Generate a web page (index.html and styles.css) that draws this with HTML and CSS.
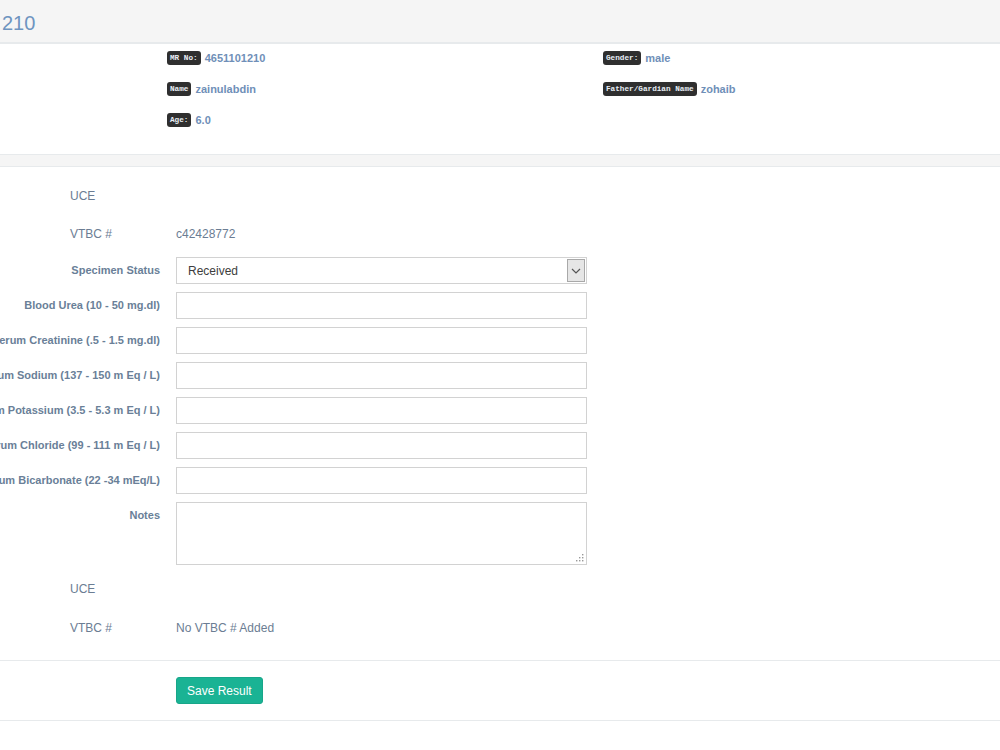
FILE: index.html
```html
<!DOCTYPE html>
<html lang="en">
<head>
  <meta charset="UTF-8" />
  <title>Lab Result</title>
  <link rel="stylesheet" href="styles.css">
</head>
<body>

<div class="page-header">
  <h2 class="page-title">210</h2>
</div>

<div class="patient-info">
  <div class="info-col">
    <div class="info-row"><span class="tag">MR No:</span><b>4651101210</b></div>
    <div class="info-row"><span class="tag">Name</span><b>zainulabdin</b></div>
    <div class="info-row"><span class="tag">Age:</span><b>6.0</b></div>
  </div>
  <div class="info-col">
    <div class="info-row"><span class="tag">Gender:</span><b>male</b></div>
    <div class="info-row"><span class="tag">Father/Gardian Name</span><b>zohaib</b></div>
  </div>
</div>

<div class="band"></div>

<form class="result-form">
  <div class="plain-row"><span class="head">UCE</span></div>
  <div class="plain-row vtbc"><span class="head">VTBC #</span><span class="value">c42428772</span></div>

  <div class="form-row">
    <label class="label"><span>Specimen Status</span></label>
    <div class="select-box">
      <select>
        <option>Received</option>
        <option>Pending</option>
        <option>Rejected</option>
      </select>
      <span class="select-arrow">
        <svg width="10" height="6" viewBox="0 0 10 6"><path d="M1 1l4 4 4-4" fill="none" stroke="#555" stroke-width="1.2"/></svg>
      </span>
    </div>
  </div>

  <div class="form-row">
    <label class="label"><span>Blood Urea (10 - 50 mg.dl)</span></label>
    <input class="field" type="text">
  </div>
  <div class="form-row">
    <label class="label"><span>Serum Creatinine (.5 - 1.5 mg.dl)</span></label>
    <input class="field" type="text">
  </div>
  <div class="form-row">
    <label class="label"><span>Serum Sodium (137 - 150 m Eq / L)</span></label>
    <input class="field" type="text">
  </div>
  <div class="form-row">
    <label class="label"><span>Serum Potassium (3.5 - 5.3 m Eq / L)</span></label>
    <input class="field" type="text">
  </div>
  <div class="form-row">
    <label class="label"><span>Serum Chloride (99 - 111 m Eq / L)</span></label>
    <input class="field" type="text">
  </div>
  <div class="form-row">
    <label class="label"><span>Serum Bicarbonate (22 -34 mEq/L)</span></label>
    <input class="field" type="text">
  </div>
  <div class="form-row">
    <label class="label"><span>Notes</span></label>
    <div class="notes-box">
      <textarea class="field notes"></textarea>
      <svg class="grip" width="8" height="8" viewBox="0 0 8 8" fill="#999">
        <rect x="6" y="0" width="1.4" height="1.4"/>
        <rect x="3" y="3" width="1.4" height="1.4"/><rect x="6" y="3" width="1.4" height="1.4"/>
        <rect x="0" y="6" width="1.4" height="1.4"/><rect x="3" y="6" width="1.4" height="1.4"/><rect x="6" y="6" width="1.4" height="1.4"/>
      </svg>
    </div>
  </div>

  <div class="plain-row uce-second"><span class="head">UCE</span></div>
  <div class="plain-row vtbc"><span class="head">VTBC #</span><span class="value">No VTBC # Added</span></div>

  <div class="actions">
    <button type="button" class="btn-save">Save Result</button>
  </div>
</form>

</body>
</html>
```

FILE: styles.css
```css
body {
  margin: 0;
  font-family: "Liberation Sans", Arial, sans-serif;
  background: #fff;
  color: #6b7d93;
}

.page-header {
  height: 42px;
  background: #f5f5f5;
  border-bottom: 2px solid #e7eaec;
}
.page-title {
  margin: 0;
  padding-left: 2px;
  font-size: 20px;
  font-weight: normal;
  line-height: 46px;
  color: #6e94c0;
}

.patient-info {
  display: flex;
  padding: 7px 0 10px 167px;
}
.info-col {
  width: 436px;
  flex-shrink: 0;
}
.info-row {
  display: flex;
  align-items: center;
  height: 14px;
  margin-bottom: 17px;
  font-size: 11px;
  color: #6f8fb8;
}
.info-row b {
  margin-left: 4px;
}
.tag {
  background: #2f2f2f;
  color: #e8eef5;
  font-family: "Liberation Mono", "DejaVu Sans Mono", monospace;
  font-size: 7.7px;
  font-weight: bold;
  line-height: 14px;
  padding: 0 3px;
  border-radius: 3px;
}

.band {
  height: 11px;
  background: #f5f5f5;
  border-top: 1px solid #e7eaec;
  border-bottom: 1px solid #e7eaec;
}

.result-form {
  padding-top: 16px;
}
.plain-row {
  display: flex;
  height: 26px;
  line-height: 26px;
  font-size: 12px;
  margin-bottom: 12px;
}
.plain-row.vtbc {
  margin-bottom: 10px;
}
.plain-row .head {
  width: 106px;
  padding-left: 70px;
}
.plain-row.uce-second {
  margin-top: 11px;
  margin-bottom: 13px;
}

.form-row {
  display: flex;
  gap: 16px;
  margin-bottom: 8px;
}
.label {
  width: 160px;
  flex-shrink: 0;
  display: flex;
  justify-content: flex-end;
  padding-top: 7px;
  font-size: 11px;
  font-weight: bold;
  line-height: 13px;
  color: #6a7f98;
  white-space: nowrap;
}
.label span {
  flex-shrink: 0;
}

.field {
  box-sizing: border-box;
  width: 411px;
  height: 27px;
  border: 1px solid #d2d2d2;
  border-radius: 0;
  padding: 4px 12px;
  font-family: inherit;
  font-size: 12px;
  outline: none;
}

.select-box {
  box-sizing: border-box;
  width: 411px;
  height: 27px;
  display: flex;
  border: 1px solid #d2d2d2;
  background: #fff;
}
.select-box select {
  flex: 1;
  appearance: none;
  border: none;
  background: transparent;
  padding: 0 11px;
  font-family: inherit;
  font-size: 12px;
  color: #3d3d3d;
  outline: none;
}
.select-arrow {
  width: 16px;
  margin: 1px;
  display: flex;
  align-items: center;
  justify-content: center;
  background: #e6e6e6;
  border: 1px solid #a9a9a9;
}

.notes-box {
  position: relative;
  width: 411px;
}
.notes {
  display: block;
  height: 63px;
  resize: none;
}
.grip {
  position: absolute;
  right: 3px;
  bottom: 3px;
}

.actions {
  border-top: 1px solid #e7eaec;
  border-bottom: 1px solid #e7eaec;
  padding: 16px 0 16px 176px;
  margin-top: 19px;
}
.btn-save {
  height: 27px;
  padding: 0 10px;
  background: #1ab394;
  border: 1px solid #18a689;
  border-radius: 3px;
  color: #fff;
  font-family: inherit;
  font-size: 12px;
}
```
